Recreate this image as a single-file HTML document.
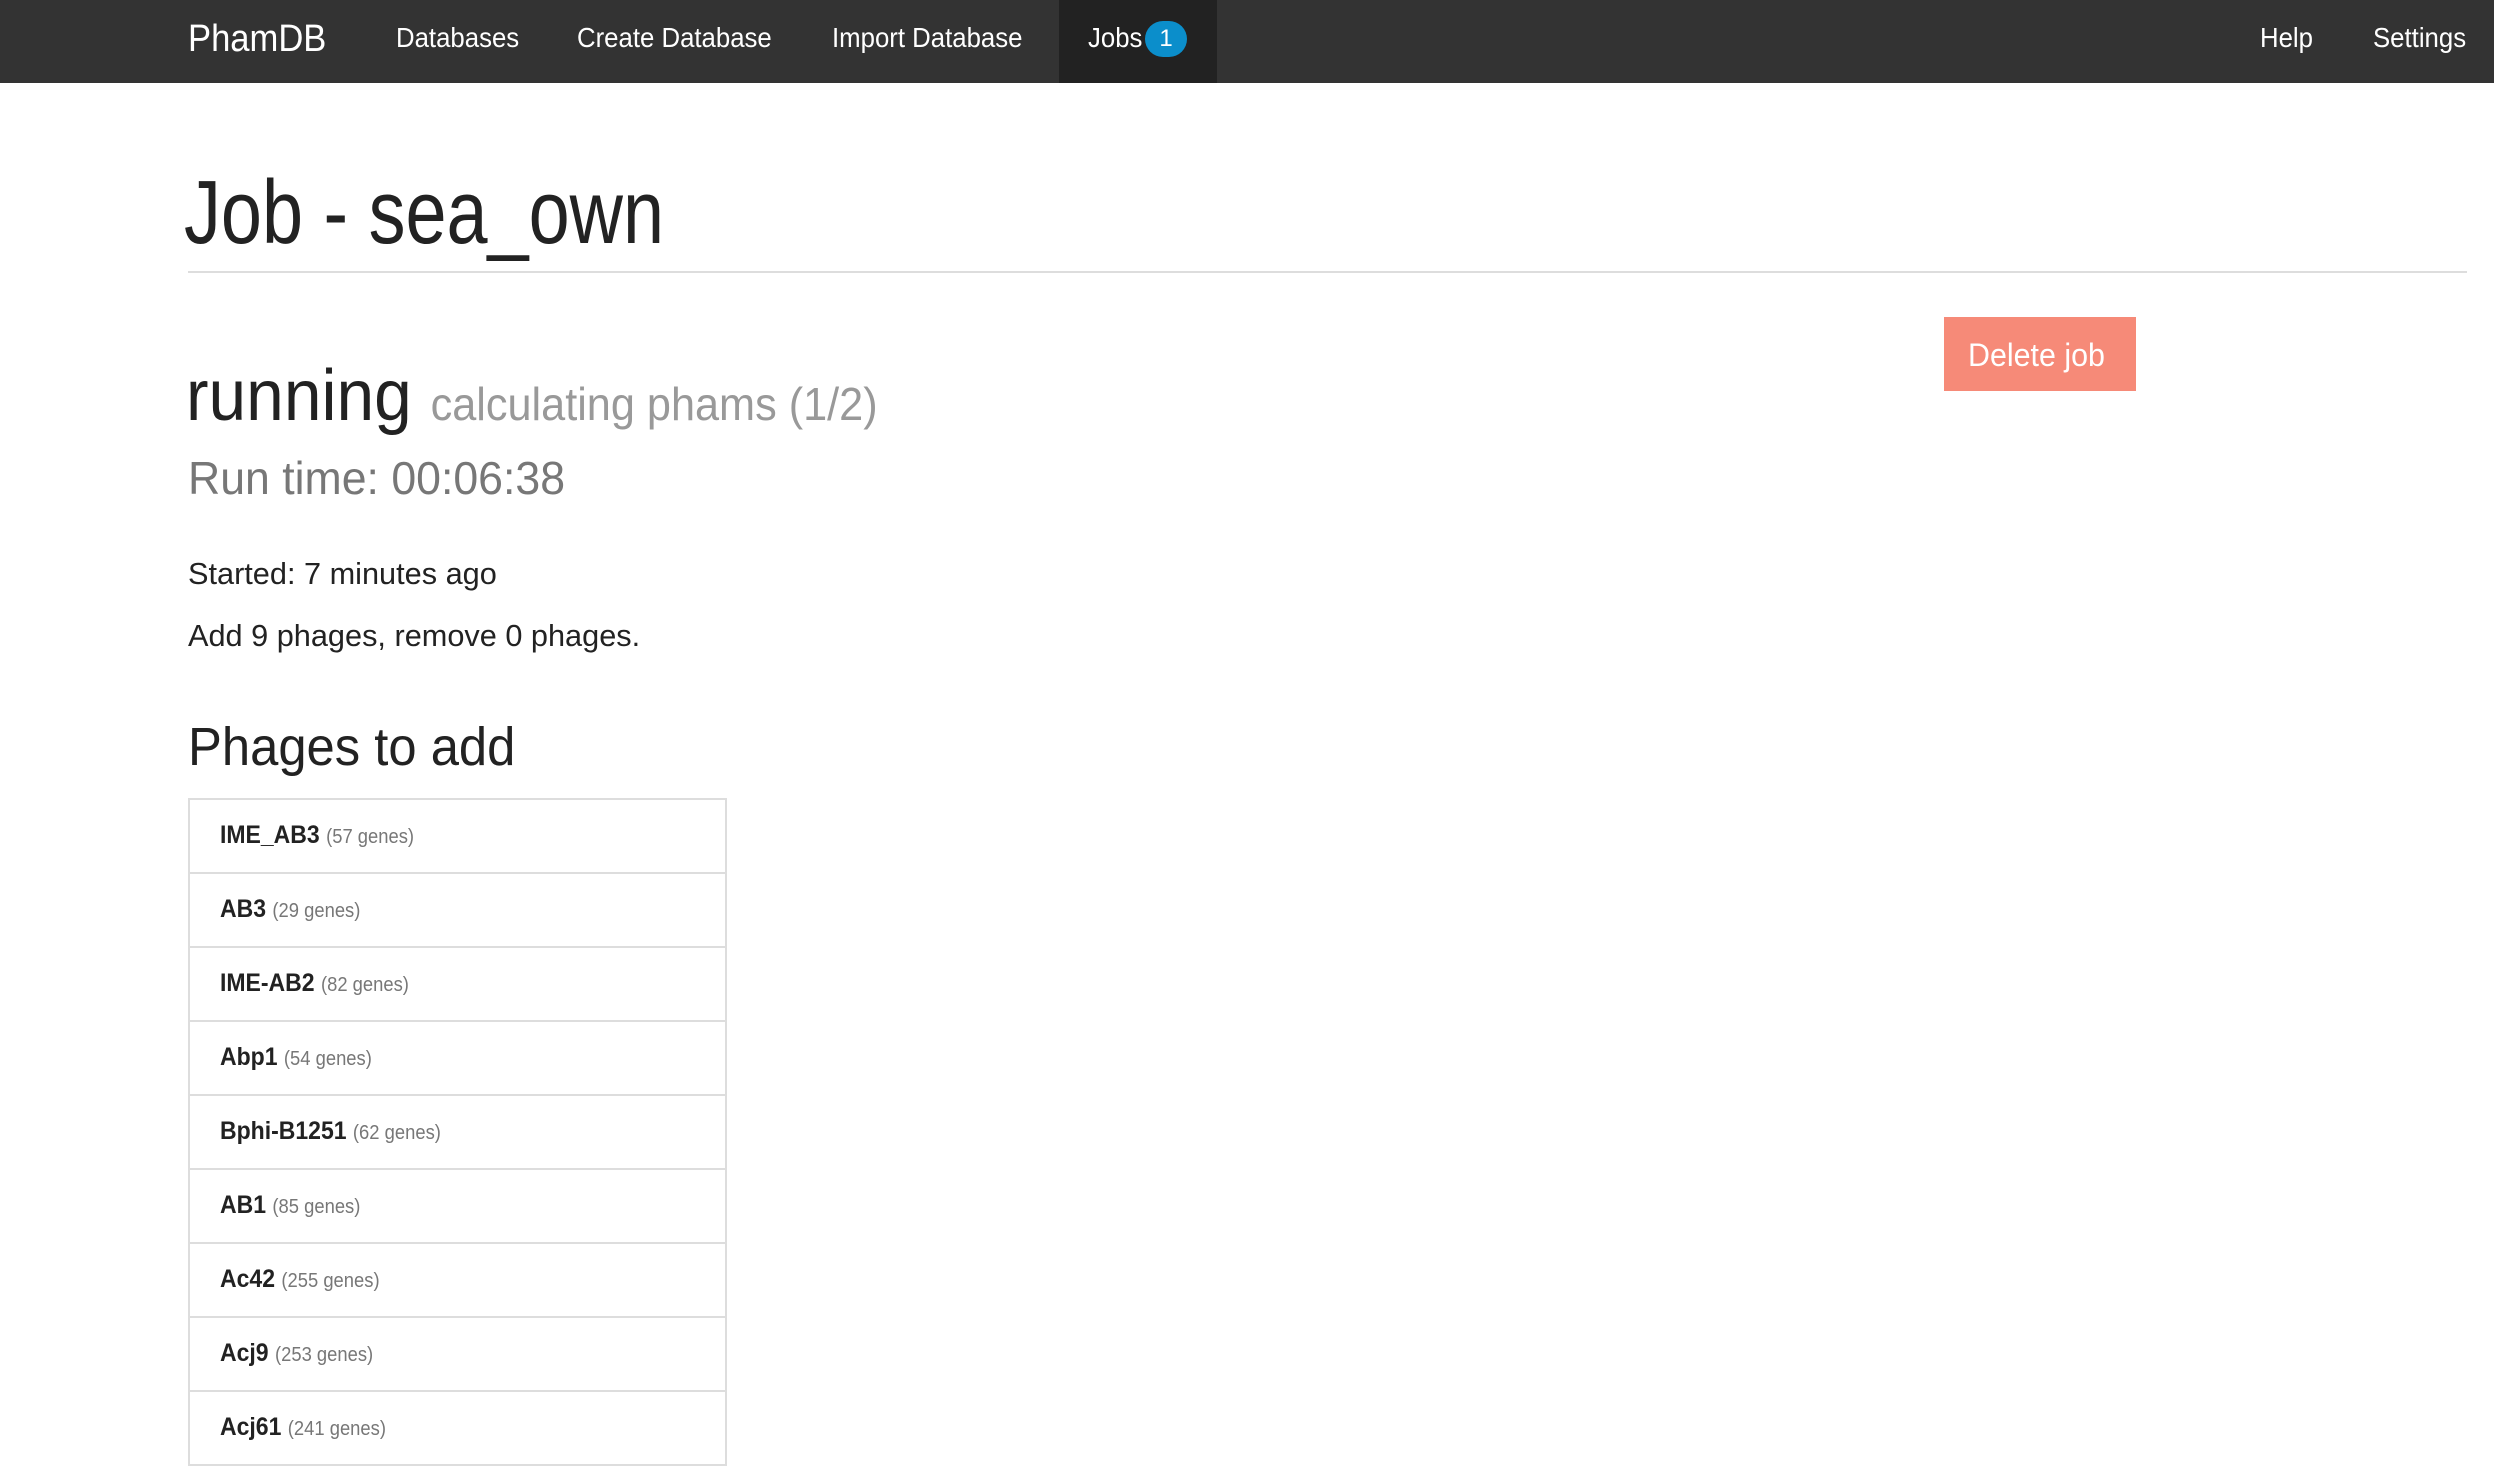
<!DOCTYPE html>
<html><head><meta charset="utf-8"><style>
*{margin:0;padding:0;box-sizing:border-box}
body{width:2494px;height:1480px;background:#fff;font-family:"Liberation Sans",sans-serif;position:relative;overflow:hidden;color:#222}
.t{position:absolute;white-space:nowrap;line-height:1;transform-origin:0 0;transform:scaleX(.99)}
nav{position:absolute;left:0;top:0;width:2494px;height:83px;background:#333}
.nl{color:#fff;font-size:28px;top:24px;transform:scaleX(.92)}
.act{position:absolute;left:1059px;top:0;width:158px;height:83px;background:#222}
.badge{position:absolute;left:1145px;top:21px;width:42px;height:36px;border-radius:18px;background:#0b8ecb;color:#fff;font-size:24px;text-align:center;line-height:36px}
.list{position:absolute;left:188px;top:798px;width:539px;border:2px solid #ddd}
.row{height:74px;border-top:2px solid #ddd;position:relative}
.row:first-child{border-top:none;height:72px}
.row span.t{left:30px;top:23px;font-size:25px;font-weight:bold;color:#222;transform:scaleX(.92)}
.row small{font-weight:normal;color:#777;font-size:20px}
.btn{position:absolute;left:1944px;top:317px;width:192px;height:74px;background:#f68a78;}
</style></head><body>
<nav>
<div class="act"></div>
<span class="t" style="left:188px;top:20px;font-size:38px;color:#fff;transform:scaleX(.91)">PhamDB</span>
<span class="t nl" style="left:396px">Databases</span>
<span class="t nl" style="left:577px">Create Database</span>
<span class="t nl" style="left:832px">Import Database</span>
<span class="t nl" style="left:1088px">Jobs</span>
<div class="badge">1</div>
<span class="t nl" style="left:2260px">Help</span>
<span class="t nl" style="left:2373px">Settings</span>
</nav>
<span class="t" style="left:184px;top:168px;font-size:90px;color:#222;transform:scaleX(.82)">Job - sea_own</span>
<div style="position:absolute;left:188px;top:271px;width:2279px;height:2px;background:#ddd"></div>
<div class="btn"><span class="t" style="left:24px;top:22px;font-size:32px;color:#fff;transform:scaleX(.95)">Delete job</span></div>
<span class="t" style="left:186px;top:360px;font-size:72px;color:#222;transform:scaleX(.94)">running <span style="font-size:46px;color:#999">calculating phams (1/2)</span></span>
<span class="t" style="left:188px;top:455px;font-size:46px;color:#777;transform:scaleX(.97)">Run time: 00:06:38</span>
<span class="t" style="left:188px;top:558px;font-size:31px;color:#222">Started: 7 minutes ago</span>
<span class="t" style="left:188px;top:620px;font-size:31px;color:#222">Add 9 phages, remove 0 phages.</span>
<span class="t" style="left:188px;top:720px;font-size:54px;color:#222;transform:scaleX(.94)">Phages to add</span>
<div class="list">
<div class="row"><span class="t">IME_AB3 <small>(57 genes)</small></span></div>
<div class="row"><span class="t">AB3 <small>(29 genes)</small></span></div>
<div class="row"><span class="t">IME-AB2 <small>(82 genes)</small></span></div>
<div class="row"><span class="t">Abp1 <small>(54 genes)</small></span></div>
<div class="row"><span class="t">Bphi-B1251 <small>(62 genes)</small></span></div>
<div class="row"><span class="t">AB1 <small>(85 genes)</small></span></div>
<div class="row"><span class="t">Ac42 <small>(255 genes)</small></span></div>
<div class="row"><span class="t">Acj9 <small>(253 genes)</small></span></div>
<div class="row"><span class="t">Acj61 <small>(241 genes)</small></span></div>
</div>
</body></html>
